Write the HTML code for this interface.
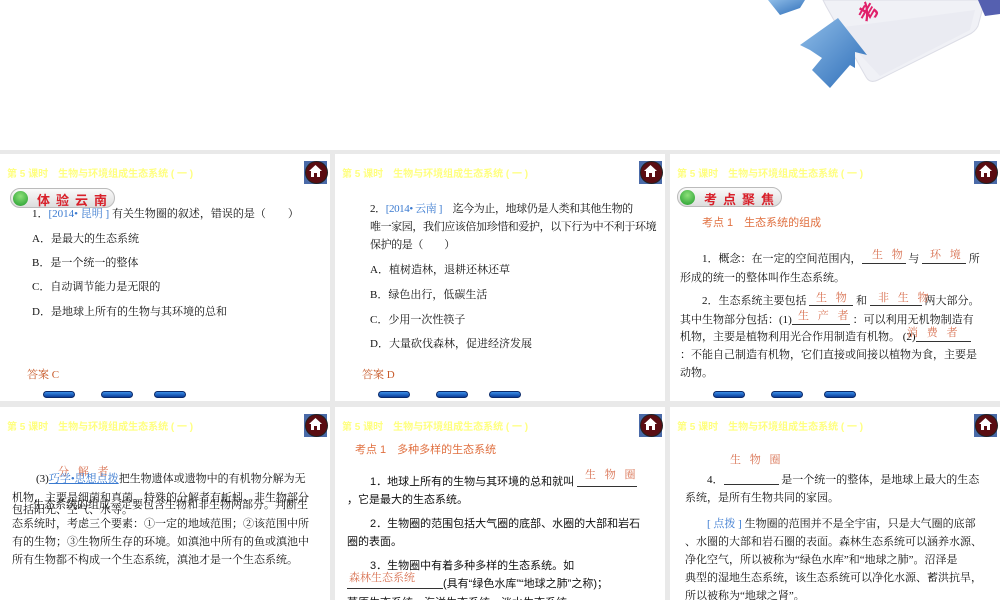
<!DOCTYPE html>
<html><head><meta charset="utf-8"><style>
*{margin:0;padding:0;box-sizing:border-box}
body{width:1000px;height:600px;background:#e9e9e9;position:relative;overflow:hidden;font-family:"Liberation Serif","Noto Serif CJK SC","Noto Sans CJK SC",serif;color:#111}
.top{position:absolute;left:0;top:0;width:1000px;height:150px;background:#fff}
.s{position:absolute;background:#fff;overflow:hidden}
.hd{position:absolute;left:7px;top:165px;font:bold 10px "Liberation Sans","Noto Sans CJK SC",sans-serif;color:#ffff80;white-space:nowrap}
.home{position:absolute;right:3px;top:7px;width:23px;height:23px;background:#4a6aa8}
.home:before{content:"";position:absolute;left:1px;top:0;width:21px;height:21px;border-radius:50%;background:#5a0d12;border:1px solid #222}
.home svg{position:absolute;left:5px;top:4px}
.t{position:absolute;font-size:11px;line-height:20px;white-space:nowrap}
.sm{letter-spacing:-.4px}
.sans{font-family:"Liberation Sans","Noto Sans CJK SC",sans-serif}
.or{color:#e07040}
.bl{color:#3a7ad0}
.ans{color:#c85a2a}
.pill{position:absolute;left:10px;top:34px;width:105px;height:20px;border-radius:10px;border:1px solid #bbb;background:linear-gradient(#fafafa,#ddd)}
.pill i{position:absolute;left:2px;top:2px;width:15px;height:15px;border-radius:50%;background:radial-gradient(circle at 50% 35%,#8de07a,#1e9a2a)}
.pill b{position:absolute;left:26px;top:1px;font:bold 13px "Noto Sans CJK SC",sans-serif;color:#d8202a;letter-spacing:6px}
.btn{position:absolute;top:237px;width:32px;height:7px;border-radius:4px;background:linear-gradient(#3b8ee8,#0a3d9a);border:1px solid #0b2a6a}
.u{display:inline-block;border-bottom:1px solid #333;height:14px;vertical-align:-2px}
.fill{position:absolute;color:#d87050;font-size:11px;letter-spacing:3px}
</style></head><body>
<div class="top">
<svg width="1000" height="150" style="position:absolute;left:0;top:0">
<defs><linearGradient id="ar" x1="0" y1="0" x2="1" y2="1"><stop offset="0" stop-color="#8fbde8"/><stop offset="1" stop-color="#2d6db8"/></linearGradient></defs>
<path d="M826 6 L823 0 L985 0 L978 26 Q975 32 968 35 L878 80 Q870 84 866 77 Z" fill="#f0f1f6" stroke="#dcdde6"/>
<path d="M835 28 Q900 20 975 10 L970 30 L880 76 Z" fill="#e6e8f0" opacity=".6"/>
<path d="M768 0 L805 0 L800 8 L780 15 Z" fill="url(#ar)"/>
<path d="M800 45 L838 18 L867 55 L855 52 L855 68 L850 65 L830 88 L812 70 L822 58 L810 50 Z" fill="url(#ar)"/>
<text x="858" y="20" font-family="Noto Sans CJK SC" font-weight="bold" font-size="20" fill="#e0206a" transform="rotate(-60 868 12)">考</text>
<path d="M978 0 L1000 0 L1000 14 L985 16 Z" fill="#5560b0"/>
</svg>
</div>

<!-- slide 1 -->
<div class="s" style="left:0;top:154px;width:330px;height:247px">
<div class="hd" style="top:11px">第 5 课时　生物与环境组成生态系统 ( 一 )</div>
<div class="home"><svg width="13" height="12"><path d="M6.5 0 L13 6 L11 6 L11 12 L8 12 L8 8 L5 8 L5 12 L2 12 L2 6 L0 6Z" fill="#fff"/></svg></div>
<div class="pill"><i></i><b>体验云南</b></div>
<div class="t" style="left:32px;top:50px">1．<span class="bl">[2014• 昆明 ]</span> 有关生物圈的叙述，错误的是（　　）</div>
<div class="t" style="left:32px;top:75px">A．是最大的生态系统</div>
<div class="t" style="left:32px;top:99px">B．是一个统一的整体</div>
<div class="t" style="left:32px;top:123px">C．自动调节能力是无限的</div>
<div class="t" style="left:32px;top:148px">D．是地球上所有的生物与其环境的总和</div>
<div class="t ans" style="left:27px;top:211px">答案 C</div>
<div class="btn" style="left:43px"></div><div class="btn" style="left:101px"></div><div class="btn" style="left:154px"></div>
</div>

<!-- slide 2 -->
<div class="s" style="left:335px;top:154px;width:330px;height:247px">
<div class="hd" style="top:11px">第 5 课时　生物与环境组成生态系统 ( 一 )</div>
<div class="home"><svg width="13" height="12"><path d="M6.5 0 L13 6 L11 6 L11 12 L8 12 L8 8 L5 8 L5 12 L2 12 L2 6 L0 6Z" fill="#fff"/></svg></div>
<div class="t sm" style="left:35px;top:45px">2．<span class="bl">[2014• 云南 ]</span>　迄今为止，地球仍是人类和其他生物的</div>
<div class="t sm" style="left:35px;top:63px">唯一家园，我们应该倍加珍惜和爱护，以下行为中不利于环境</div>
<div class="t sm" style="left:35px;top:81px">保护的是（　　）</div>
<div class="t" style="left:35px;top:106px">A．植树造林，退耕还林还草</div>
<div class="t" style="left:35px;top:131px">B．绿色出行，低碳生活</div>
<div class="t" style="left:35px;top:156px">C．少用一次性筷子</div>
<div class="t" style="left:35px;top:180px">D．大量砍伐森林，促进经济发展</div>
<div class="t ans" style="left:27px;top:211px">答案 D</div>
<div class="btn" style="left:43px"></div><div class="btn" style="left:101px"></div><div class="btn" style="left:154px"></div>
</div>

<!-- slide 3 -->
<div class="s" style="left:670px;top:154px;width:330px;height:247px">
<div class="hd" style="top:11px">第 5 课时　生物与环境组成生态系统 ( 一 )</div>
<div class="home"><svg width="13" height="12"><path d="M6.5 0 L13 6 L11 6 L11 12 L8 12 L8 8 L5 8 L5 12 L2 12 L2 6 L0 6Z" fill="#fff"/></svg></div>
<div class="pill" style="left:7px;top:33px"><i></i><b>考点聚焦</b></div>
<div class="t or sans" style="left:32px;top:59px">考点 1　生态系统的组成</div>
<div class="t" style="left:32px;top:95px">1．概念：在一定的空间范围内，<span class="u" style="width:44px"></span> 与 <span class="u" style="width:44px"></span> 所</div>
<div class="t" style="left:10px;top:114px">形成的统一的整体叫作生态系统。</div>
<div class="t" style="left:32px;top:137px">2．生态系统主要包括 <span class="u" style="width:44px"></span> 和 <span class="u" style="width:52px"></span> 两大部分。</div>
<div class="t" style="left:10px;top:156px">其中生物部分包括：(1)<span class="u" style="width:58px"></span> ：可以利用无机物制造有</div>
<div class="t" style="left:10px;top:173px">机物，主要是植物利用光合作用制造有机物。 (2)<span class="u" style="width:55px"></span></div>
<div class="t" style="left:10px;top:191px">：不能自己制造有机物，它们直接或间接以植物为食，主要是</div>
<div class="t" style="left:10px;top:209px">动物。</div>
<div class="fill" style="left:202px;top:92px">生 物</div><div class="fill" style="left:260px;top:92px">环 境</div>
<div class="fill" style="left:146px;top:135px">生 物</div><div class="fill" style="left:208px;top:135px">非 生 物</div>
<div class="fill" style="left:128px;top:153px">生 产 者</div><div class="fill" style="left:237px;top:170px">消 费 者</div>
<div class="btn" style="left:43px"></div><div class="btn" style="left:101px"></div><div class="btn" style="left:154px"></div>
</div>

<!-- slide 4 -->
<div class="s" style="left:0;top:407px;width:330px;height:193px">
<div class="hd" style="top:11px">第 5 课时　生物与环境组成生态系统 ( 一 )</div>
<div class="home"><svg width="13" height="12"><path d="M6.5 0 L13 6 L11 6 L11 12 L8 12 L8 8 L5 8 L5 12 L2 12 L2 6 L0 6Z" fill="#fff"/></svg></div>
<div class="fill" style="left:58px;top:56px">分 解 者</div>
<div class="t" style="left:36px;top:62px">(3)<span class="bl" style="text-decoration:underline">巧学•思想点拨</span>把生物遗体或遗物中的有机物分解为无</div>
<div class="t" style="left:12px;top:81px">机物，主要是细菌和真菌。特殊的分解者有蚯蚓。非生物部分</div>
<div class="t" style="left:12px;top:93px">包括阳光、空气、水等。</div>
<div class="t" style="left:33px;top:88px">生态系统的组成一定要包含生物和非生物两部分。判断生</div>
<div class="t" style="left:12px;top:107px">态系统时，考虑三个要素：①一定的地域范围；②该范围中所</div>
<div class="t" style="left:12px;top:125px">有的生物；③生物所生存的环境。如滇池中所有的鱼或滇池中</div>
<div class="t" style="left:12px;top:143px">所有生物都不构成一个生态系统，滇池才是一个生态系统。</div>
</div>

<!-- slide 5 -->
<div class="s" style="left:335px;top:407px;width:330px;height:193px">
<div class="hd" style="top:11px">第 5 课时　生物与环境组成生态系统 ( 一 )</div>
<div class="home"><svg width="13" height="12"><path d="M6.5 0 L13 6 L11 6 L11 12 L8 12 L8 8 L5 8 L5 12 L2 12 L2 6 L0 6Z" fill="#fff"/></svg></div>
<div class="t or sans" style="left:20px;top:33px">考点 1　多种多样的生态系统</div>
<div class="fill" style="left:250px;top:59px">生 物 圈</div>
<div class="t sans" style="left:35px;top:65px">1．地球上所有的生物与其环境的总和就叫 <span class="u" style="width:60px"></span></div>
<div class="t sans" style="left:12px;top:83px">，它是最大的生态系统。</div>
<div class="t sans" style="left:35px;top:107px">2．生物圈的范围包括大气圈的底部、水圈的大部和岩石</div>
<div class="t sans" style="left:12px;top:125px">圈的表面。</div>
<div class="t sans" style="left:35px;top:149px">3．生物圈中有着多种多样的生态系统。如</div>
<div class="fill" style="left:14px;top:162px;letter-spacing:0">森林生态系统</div>
<div class="t sans" style="left:12px;top:167px"><span class="u" style="width:96px"></span>(具有“绿色水库”“地球之肺”之称)；</div>
<div class="t sans" style="left:12px;top:186px">草原生态系统、海洋生态系统、淡水生态系统</div>
</div>

<!-- slide 6 -->
<div class="s" style="left:670px;top:407px;width:330px;height:193px">
<div class="hd" style="top:11px">第 5 课时　生物与环境组成生态系统 ( 一 )</div>
<div class="home"><svg width="13" height="12"><path d="M6.5 0 L13 6 L11 6 L11 12 L8 12 L8 8 L5 8 L5 12 L2 12 L2 6 L0 6Z" fill="#fff"/></svg></div>
<div class="fill" style="left:60px;top:44px">生 物 圈</div>
<div class="t" style="left:37px;top:63px">4．<span class="u" style="width:55px"></span> 是一个统一的整体，是地球上最大的生态</div>
<div class="t" style="left:15px;top:81px">系统，是所有生物共同的家园。</div>
<div class="t" style="left:37px;top:107px"><span class="bl">[ 点拨 ]</span> 生物圈的范围并不是全宇宙，只是大气圈的底部</div>
<div class="t" style="left:15px;top:125px">、水圈的大部和岩石圈的表面。森林生态系统可以涵养水源、</div>
<div class="t" style="left:15px;top:143px">净化空气，所以被称为“绿色水库”和“地球之肺”。沼泽是</div>
<div class="t" style="left:15px;top:161px">典型的湿地生态系统，该生态系统可以净化水源、蓄洪抗旱，</div>
<div class="t" style="left:15px;top:179px">所以被称为“地球之肾”。</div>
</div>
</body></html>
